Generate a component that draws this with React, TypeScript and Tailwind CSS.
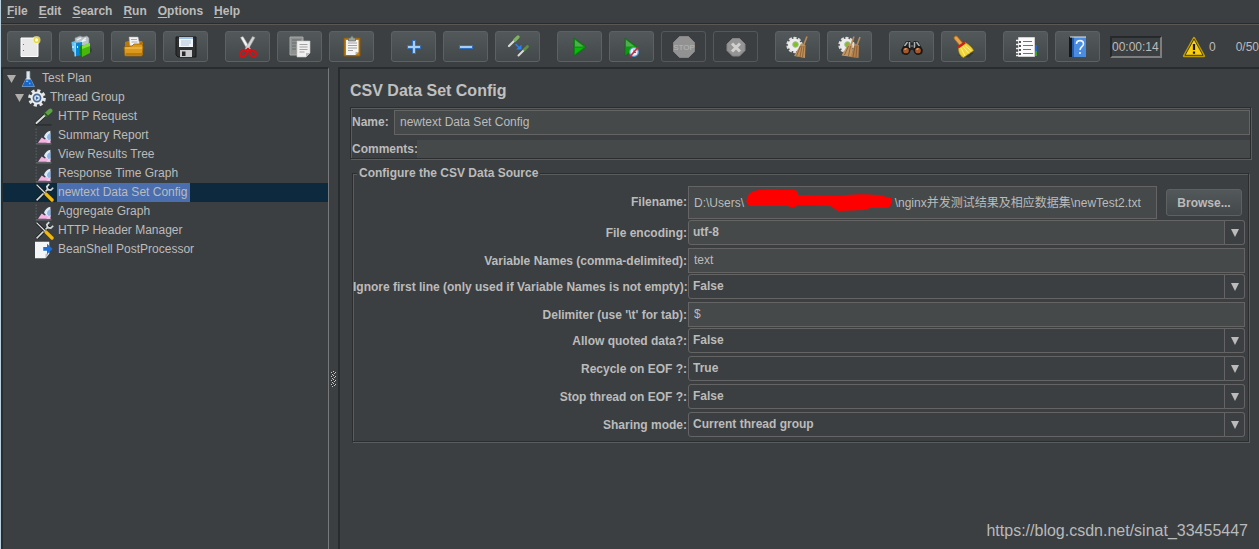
import { Fragment, useState } from 'react';
import type { ReactNode } from 'react';

const menus = ['File', 'Edit', 'Search', 'Run', 'Options', 'Help'];

function Svg({ children, size = 24 }: { children: ReactNode; size?: number }) {
  return (
    <svg width={size} height={size} viewBox="0 0 24 24" aria-hidden="true" className="shrink-0">
      {children}
    </svg>
  );
}

/* ---------- toolbar icons ---------- */

const NewIcon = () => (
  <Svg>
    <path d="M3 3h17v18.500H3z" fill="#e9e9e9" stroke="#fff" />
    <path d="M5 9.500h1M5 15.500h1" stroke="#777" />
    <circle cx="18.500" cy="5" r="4" fill="#f7f3b4" opacity=".7" />
    <circle cx="18.500" cy="5" r="2.300" fill="#fffce0" stroke="#e6d838" strokeWidth="1.300" />
  </Svg>
);

const TemplatesIcon = () => (
  <Svg>
    <path d="M5 3l5-2 3 1 4-1 2 2v8H5z" fill="#b9c3c8" stroke="#7f8d94" strokeWidth=".6" />
    <path d="M7 5l4-2M12 6l4-3M9 8l7-3" stroke="#eef3f5" strokeWidth="1.200" />
    <path d="M14 20l8-3v-3l-4-4z" fill="#2b2f31" opacity=".5" />
    <path d="M1.500 7l4-1 1 13-4-3z" fill="#5fc2f5" />
    <path d="M4 8l8-1v13l-7 1.500z" fill="#0a84d4" />
    <path d="M4 8l2-.3v13.500l-1.500.2z" fill="#8ad6ff" />
    <path d="M9.500 11l3-1v12l-3-3z" fill="#0e8a0b" />
    <path d="M12 11l8-3v10l-8 4z" fill="#47b80a" />
    <path d="M12 11l8-3v3l-8 3z" fill="#86e03a" />
    <path d="M3 11v2M7.500 11v2" stroke="#fff" />
  </Svg>
);

const OpenIcon = () => (
  <Svg>
    <path d="M3 7l3-1h14l1 2v12H3z" fill="#b97709" />
    <path d="M7 2h9l2 9H8z" fill="#f4f4f4" stroke="#aaa" strokeWidth=".5" />
    <path d="M9 4.500h6M9.500 7h6" stroke="#999" strokeWidth=".8" />
    <path d="M2 12l8-1 2-2h8l1 3-1 9H3z" fill="#dc9a1c" stroke="#9b6408" strokeWidth=".8" />
    <path d="M3 13h17" stroke="#f5c563" />
    <path d="M4 18h16v2.500H4z" fill="#b97b10" />
  </Svg>
);

const SaveIcon = () => (
  <Svg>
    <path d="M2 2h20v20H4l-2-2z" fill="#2e3032" stroke="#17191a" />
    <path d="M5 2h14v10H5z" fill="#f2f6fa" />
    <path d="M5 2h14v2H5z" fill="#9fc3e4" />
    <path d="M7 6h10M7 8h10M7 10h8" stroke="#9eb6cc" strokeWidth=".8" />
    <path d="M6 15h12v7H6z" fill="#c9cbcd" />
    <path d="M8 16.500h3.500v4.500H8z" fill="#26282a" />
  </Svg>
);

const CutIcon = () => (
  <Svg>
    <path d="M4.500 2.500l2.500-1 7.500 12.500-2.500 2z" fill="#f3f3f3" stroke="#9a9a9a" strokeWidth=".5" />
    <path d="M19 2.500l-2.500-1L9 14l2.500 2z" fill="#d4d4d4" stroke="#9a9a9a" strokeWidth=".5" />
    <ellipse cx="7.200" cy="18.500" rx="3.400" ry="2.600" fill="none" stroke="#d90f14" strokeWidth="2.300" transform="rotate(-30 7.200 18.500)" />
    <ellipse cx="16.800" cy="18.500" rx="3.400" ry="2.600" fill="none" stroke="#d90f14" strokeWidth="2.300" transform="rotate(30 16.800 18.500)" />
    <path d="M9 16.500l3-2.500 3 2.500" fill="none" stroke="#d90f14" strokeWidth="2.400" />
  </Svg>
);

const CopyIcon = () => (
  <Svg>
    <path d="M2 2h13v18H2z" fill="#8d918f" stroke="#a6a9a8" />
    <path d="M4 5h9M4 8h5M4 11h4M4 14h4" stroke="#666a69" />
    <path d="M9 6h13v12l-4 4H9z" fill="#f0f0f0" stroke="#c8c8c8" strokeWidth=".6" />
    <path d="M11.500 9.500h8M11.500 12h8M11.500 14.500h8M11.500 17h5" stroke="#a3a3a3" />
    <path d="M22 18h-4v4z" fill="#b8b8b8" />
  </Svg>
);

const PasteIcon = () => (
  <Svg>
    <path d="M4 3h16v18H4z" fill="#c17d11" stroke="#8f5902" />
    <path d="M6 5h12.500v12l-3 3H6z" fill="#f5f5f5" />
    <path d="M8 8h9M8 10.500h9M8 13h9M8 15.500h5" stroke="#a0a0a0" />
    <path d="M18.500 17h-3v3z" fill="#b5b5b5" />
    <path d="M8.500 3h2l1-2h1l1 2h2v3h-7z" fill="#9aa09a" stroke="#646864" strokeWidth=".7" />
  </Svg>
);

const PlusIcon = () => (
  <Svg>
    <path d="M10.500 5.500h3v5h5v3h-5v5h-3v-5h-5v-3h5z" fill="#a8cdf5" stroke="#2f70c0" />
  </Svg>
);

const MinusIcon = () => (
  <Svg>
    <path d="M5.500 10.500h13v3h-13z" fill="#a8cdf5" stroke="#2f70c0" />
  </Svg>
);

const ToggleIcon = () => (
  <Svg>
    <path d="M3 11l7-7" stroke="#d8dbd8" strokeWidth="2.200" strokeLinecap="round" />
    <path d="M9 5l3-3" stroke="#7fb265" strokeWidth="3.200" strokeLinecap="round" />
    <path d="M12.500 20.500l6-6" stroke="#d8dbd8" strokeWidth="2" strokeLinecap="round" />
    <path d="M18.500 14.500l3-3" stroke="#5d8f49" strokeWidth="2.800" strokeLinecap="round" />
    <path d="M9.500 9l4 4" stroke="#2b7ff0" strokeWidth="1.500" />
    <path d="M15.500 9.500V14.500H10z" fill="#2b7ff0" />
  </Svg>
);

const StartIcon = () => (
  <Svg>
    <path d="M6 3l12 9-12 9z" fill="#0b9c0b" stroke="#0a6d12" strokeWidth=".7" />
    <path d="M7 5l8.500 6.500H7z" fill="#4fae4f" />
    <path d="M7 13h8l-8 6z" fill="#08bb08" />
  </Svg>
);

const StartNoPauseIcon = () => (
  <Svg>
    <path d="M5 3l12 9-12 9z" fill="#0b9c0b" stroke="#0a6d12" strokeWidth=".7" />
    <path d="M6 5l8.500 6.500H6z" fill="#4fae4f" />
    <circle cx="14" cy="17" r="4.300" fill="#e8f2fb" stroke="#4e9bdd" strokeWidth="1.300" />
    <path d="M14 14.500v3h2" fill="none" stroke="#3b6ea5" />
    <path d="M10 21.500l8-9" stroke="#d6252b" strokeWidth="1.700" />
  </Svg>
);

const StopIcon = () => (
  <Svg>
    <path d="M7.500 1.500h9l6 6v9l-6 6h-9l-6-6v-9z" fill="#929292" stroke="#858585" />
    <text x="12" y="15" textAnchor="middle" fontSize="8" fill="#b8b8b8">
      STOP
    </text>
  </Svg>
);

const ShutdownIcon = () => (
  <Svg>
    <path d="M8.500 3.500h7l5.500 5.500v6.500l-5.500 5.500h-7L3 15.500V9z" fill="#949494" stroke="#858585" />
    <path d="M8 8.500l8 8M16 8.500l-8 8" stroke="#d0d0d0" strokeWidth="3" />
  </Svg>
);

function Gear() {
  return (
    <>
      <circle cx="8.500" cy="10" r="6.800" fill="none" stroke="#dcdcdc" strokeWidth="2.800" strokeDasharray="3 1.400" />
      <circle cx="8.500" cy="10" r="6.500" fill="#ededed" />
      <circle cx="9.500" cy="9.500" r="2.800" fill="#79c61b" stroke="#a9b79b" />
    </>
  );
}

const ClearIcon = () => (
  <Svg>
    <Gear />
    <path d="M21 1.500l-3.500 9" stroke="#b98a55" strokeWidth="1.600" />
    <path d="M15 8.500l4.500 1.500-.5 13-11-2z" fill="#bd8f5c" />
    <path d="M14.500 11l-4 10M16 11l-2 11M18 11l-1.500 11" stroke="#87592d" strokeWidth=".8" />
  </Svg>
);

const ClearAllIcon = () => (
  <Svg>
    <Gear />
    <path d="M16 1.500l-3 9M22 2l-3 8" stroke="#b98a55" strokeWidth="1.600" />
    <path d="M10.500 8.500l4 1.500v12l-11-1.500z" fill="#c49762" />
    <path d="M17 8.500l4 1.500-.5 13-8-1z" fill="#b2814d" />
    <path d="M10.500 11l-4 9M12.500 11l-2 10M17 11l-2 11M19 11l-1 11" stroke="#87592d" strokeWidth=".8" />
  </Svg>
);

const SearchIcon = () => (
  <Svg>
    <path d="M1 15l5-9h4l2 2 2-2h4l5 9-1 4-5 1-4-5h-2l-4 5-5-1z" fill="#232323" />
    <path d="M4.500 11l3-4M19.500 11l-3-4M9.500 7v6M14.500 7v6" stroke="#a9b0b6" strokeWidth="1.500" />
    <path d="M10 11h4" stroke="#555" strokeWidth="2" />
    <circle cx="6" cy="15.500" r="3.600" fill="#a7582a" stroke="#161616" strokeWidth="1.500" />
    <circle cx="18" cy="15.500" r="3.600" fill="#a7582a" stroke="#161616" strokeWidth="1.500" />
    <path d="M4.500 14.500l2-1M16.500 14.500l2-1" stroke="#efb27c" strokeWidth="1.200" />
  </Svg>
);

const BroomIcon = () => (
  <Svg>
    <path d="M5 20l12 2.500 5-5z" fill="#252829" opacity=".5" />
    <path d="M4 3l5 6" stroke="#a66a24" strokeWidth="4.600" strokeLinecap="round" />
    <path d="M4 3l5 6" stroke="#e6a549" strokeWidth="3" strokeLinecap="round" />
    <path d="M6.500 12l6.500-4.500c5 3 7 5 8.500 8l-10 7C7.500 20.500 6.500 17 6.500 12z" fill="#f0d332" stroke="#b89a16" strokeWidth=".7" />
    <path d="M9 13l4 8M11 11.500l6 7M13 10.500l6.500 5.500" stroke="#fdf090" />
    <path d="M6 12.500l7-5" stroke="#cf2118" strokeWidth="2.600" />
  </Svg>
);

const FunctionIcon = () => (
  <Svg>
    <path d="M20 10h3v6h-3z" fill="#2166cc" />
    <path d="M20 16h3v5h-3z" fill="#39a521" />
    <path d="M4.500 2.500h16v19h-16z" fill="#fbfbfb" stroke="#d0d0d0" />
    <path d="M9 6.500h9M9 10.500h10M9 14.500h8M9 18.500h10" stroke="#4779c4" strokeWidth="1.200" />
    <path d="M2 5.500h4M2 9.500h4M2 13.500h4M2 17.500h4M2 20.500h4" stroke="#f4f4f4" strokeWidth="1.600" />
    <path d="M5 7h2M5 11h2M5 15h2M5 19h2" stroke="#222" strokeWidth="1.400" />
  </Svg>
);

const HelpIcon = () => (
  <Svg>
    <path d="M3 2h4v20H3z" fill="#15171a" />
    <path d="M6 2h14v20H6z" fill="#4b8be0" />
    <path d="M6 2h2v20H6z" fill="#2360ad" />
    <path d="M4 2h16" stroke="#dfe8f2" />
    <path d="M10.500 9c0-4.500 7-4.500 7 0 0 2.500-3.500 3-3.500 6M14 17v2" fill="none" stroke="#eef5ff" strokeWidth="1.600" />
  </Svg>
);

const WarningIcon = () => (
  <Svg>
    <path d="M12 3l10 18H2z" fill="#f9cf10" stroke="#b99a0c" strokeWidth="2.400" strokeLinejoin="round" />
    <path d="M12 4l9 16.300H3z" fill="#f9cf10" stroke="#3a3410" strokeWidth=".9" strokeLinejoin="round" />
    <path d="M12 9v6M12 16.500v2.300" stroke="#1b1b1b" strokeWidth="2.200" />
  </Svg>
);

/* ---------- tree icons ---------- */

const FlaskIcon = () => (
  <Svg size={18}>
    <path d="M9 2h4v8l6 12H3l6-12z" fill="#dfe9f2" stroke="#b3c3d0" />
    <path d="M7.500 12.500h7l4.500 9.500H3z" fill="#1767c8" />
    <path d="M8 15h3M12 18h2" stroke="#68b2ff" strokeWidth="2" />
  </Svg>
);

const GearIcon = () => (
  <Svg size={18}>
    <circle cx="12" cy="12" r="9.800" fill="none" stroke="#e3e6e9" strokeWidth="4" strokeDasharray="4.200 3.497" />
    <circle cx="12" cy="12" r="8.600" fill="#eceef0" />
    <circle cx="12" cy="12" r="4.800" fill="#dbe8f7" stroke="#4d6990" strokeWidth="2.200" />
    <path d="M10.500 9.500l4 2.500-4 2.500z" fill="#2f68ac" />
  </Svg>
);

const PipetteIcon = () => (
  <Svg size={18}>
    <path d="M1 22.500h21" stroke="#2b2e30" strokeWidth="2" />
    <path d="M2 20L14 9" stroke="#23272a" strokeWidth="4.600" strokeLinecap="round" />
    <path d="M2 20L14 9" stroke="#d9dddb" strokeWidth="2.600" strokeLinecap="round" />
    <path d="M15 8.500l5.500-5" stroke="#5da343" strokeWidth="5.500" strokeLinecap="round" />
    <path d="M12.500 6.500l5 5" stroke="#2d5524" strokeWidth="2" />
  </Svg>
);

const GraphIcon = () => (
  <Svg size={18}>
    <path d="M1.500 2v20" stroke="#67707a" strokeDasharray="2 2" />
    <path d="M1 22.500h21" stroke="#858b90" />
    <path d="M4 21l5-7 4 2.500L17 14l4 7z" fill="#f5b4e4" />
    <path d="M12 13c1-4 4-7 8.500-8v14C17 18 14 16 12 13z" fill="#dcebfa" />
    <path d="M16 14c0-3 2-5 4.500-6v10c-2 0-4-1.500-4.500-4z" fill="#8db6e6" />
    <path d="M15 21l5.500-5V21z" fill="#f7c8ec" />
  </Svg>
);

const ToolsIcon = () => (
  <Svg size={19}>
    <path d="M2 22L18 6" stroke="#191c1e" strokeWidth="4" />
    <path d="M2 22L17 7" stroke="#d6d9d9" strokeWidth="2" />
    <path d="M18 1.500l-3 3 1 4 4 .5 3-3" fill="none" stroke="#d6d9d9" strokeWidth="2.200" />
    <path d="M2 2l11 11" stroke="#16191b" strokeWidth="3.600" />
    <path d="M2 2l11 11" stroke="#e0e0e0" strokeWidth="1.600" />
    <path d="M14 14l7.500 7.500" stroke="#f2b90f" strokeWidth="4.200" strokeLinecap="round" />
  </Svg>
);

const ScriptIcon = () => (
  <Svg size={18}>
    <path d="M0 1h19v16l-5 6H0z" fill="#f3f5f6" />
    <path d="M19 17l-5 6v-6z" fill="#b9c0c4" />
    <path d="M11 8h5V3.500l7.500 7-7.500 7V13h-5z" fill="#1b6fd6" />
  </Svg>
);

const toolGroups = [
  [
    { label: 'New', icon: <NewIcon /> },
    { label: 'Templates', icon: <TemplatesIcon /> },
    { label: 'Open', icon: <OpenIcon /> },
    { label: 'Save', icon: <SaveIcon /> },
  ],
  [
    { label: 'Cut', icon: <CutIcon /> },
    { label: 'Copy', icon: <CopyIcon /> },
    { label: 'Paste', icon: <PasteIcon /> },
  ],
  [
    { label: 'Expand All', icon: <PlusIcon /> },
    { label: 'Collapse All', icon: <MinusIcon /> },
    { label: 'Toggle', icon: <ToggleIcon /> },
  ],
  [
    { label: 'Start', icon: <StartIcon /> },
    { label: 'Start no pauses', icon: <StartNoPauseIcon /> },
    { label: 'Stop', icon: <StopIcon />, disabled: true },
    { label: 'Shutdown', icon: <ShutdownIcon />, disabled: true },
  ],
  [
    { label: 'Clear', icon: <ClearIcon /> },
    { label: 'Clear All', icon: <ClearAllIcon /> },
  ],
  [
    { label: 'Search', icon: <SearchIcon /> },
    { label: 'Reset Search', icon: <BroomIcon /> },
  ],
  [
    { label: 'Function Helper', icon: <FunctionIcon /> },
    { label: 'Help', icon: <HelpIcon /> },
  ],
];

const treeItems = [
  { name: 'HTTP Request', icon: <PipetteIcon /> },
  { name: 'Summary Report', icon: <GraphIcon /> },
  { name: 'View Results Tree', icon: <GraphIcon /> },
  { name: 'Response Time Graph', icon: <GraphIcon /> },
  { name: 'newtext Data Set Config', icon: <ToolsIcon /> },
  { name: 'Aggregate Graph', icon: <GraphIcon /> },
  { name: 'HTTP Header Manager', icon: <ToolsIcon /> },
  { name: 'BeanShell PostProcessor', icon: <ScriptIcon /> },
];

const fields = [
  { id: 'encoding', label: 'File encoding:', kind: 'combo', value: 'utf-8', options: ['utf-8', 'UTF-16', 'ISO-8859-15', 'US-ASCII'], editable: true },
  { id: 'variables', label: 'Variable Names (comma-delimited):', kind: 'text', value: 'text' },
  { id: 'ignore', label: 'Ignore first line (only used if Variable Names is not empty):', kind: 'combo', value: 'False', options: ['True', 'False'] },
  { id: 'delimiter', label: "Delimiter (use '\\t' for tab):", kind: 'text', value: '$' },
  { id: 'quoted', label: 'Allow quoted data?:', kind: 'combo', value: 'False', options: ['True', 'False'] },
  { id: 'recycle', label: 'Recycle on EOF ?:', kind: 'combo', value: 'True', options: ['True', 'False'] },
  { id: 'stop', label: 'Stop thread on EOF ?:', kind: 'combo', value: 'False', options: ['True', 'False'] },
  { id: 'sharing', label: 'Sharing mode:', kind: 'combo', value: 'Current thread group', options: ['All threads', 'Current thread group', 'Current thread'] },
];

// blank stretch under the red marker
const hiddenPath = '\u3000'.repeat(12) + '  ';

function Toolbar() {
  return (
    <div className="flex items-center gap-[17px] overflow-hidden border-t border-[#5b5754] py-[6px] pl-[6px]">
      {toolGroups.map((group) => (
        <div key={group[0].label} className="flex shrink-0 gap-[7px]">
          {group.map((tool) => (
            <button
              key={tool.label}
              type="button"
              aria-label={tool.label}
              disabled={'disabled' in tool}
              className="flex h-[31px] w-[45px] items-center justify-center rounded-[3px] border border-[#5e6162] bg-linear-to-b from-[#53585a] to-[#43484a] disabled:border-[#565858] disabled:from-[#3c3f41] disabled:to-[#3c3f41]"
            >
              {tool.icon}
            </button>
          ))}
        </div>
      ))}
      <div className="-ml-[7px] flex shrink-0 items-center">
        <span className="w-[52px] border-2 border-t-[#26292b] border-l-[#26292b] border-r-[#7b7d7e] border-b-[#7b7d7e] leading-[18px]">00:00:14</span>
        <span className="ml-5 flex items-center gap-[3px]">
          <WarningIcon />
          0
        </span>
        <span className="ml-5">0/50</span>
      </div>
    </div>
  );
}

function Arrow() {
  return (
    <svg width="9" height="8" viewBox="0 0 9 8" aria-hidden="true" className="shrink-0">
      <path d="M0 0h9L4.500 8z" fill="#b0adab" />
    </svg>
  );
}

function TreePanel() {
  const [selected, setSelected] = useState('newtext Data Set Config');
  return (
    <aside className="w-[328px] shrink-0 border-t-2 border-r border-l-2 border-t-[#292c2e] border-r-[#77797a] border-l-[#292c2e]">
      <ul className="leading-[19px]">
        <li className="flex h-[19px] items-center gap-1 pl-1">
          <Arrow />
          <FlaskIcon />
          Test Plan
        </li>
        <li className="flex h-[19px] items-center gap-1 pl-3">
          <Arrow />
          <GearIcon />
          Thread Group
        </li>
        {treeItems.map((item) => (
          <li key={item.name} className={selected === item.name ? 'bg-[#0d293e]' : ''}>
            <button type="button" onClick={() => setSelected(item.name)} className="flex h-[19px] w-full items-center pl-8">
              <span className="flex w-[22px] justify-start">{item.icon}</span>
              <span className={selected === item.name ? 'bg-[#4b6eaf] pr-[3px] pl-[1px]' : 'pl-[1px]'}>{item.name}</span>
            </button>
          </li>
        ))}
      </ul>
    </aside>
  );
}

function Splitter() {
  return (
    <div className="flex w-[9px] shrink-0 flex-col items-center justify-center pb-[1px]">
      <div className="h-[142px]" />
      <svg width="5" height="16" aria-hidden="true">
        <defs>
          <pattern id="grip" width="4" height="4" patternUnits="userSpaceOnUse">
            <path d="M0 1h1v1H0zM2 0h1v1H2zM1 3h1v1H1zM3 2h1v1H3z" fill="#c9cacb" />
            <path d="M1 2h1v1H1zM3 1h1v1H3z" fill="#1f2122" />
          </pattern>
        </defs>
        <rect width="5" height="16" fill="url(#grip)" />
      </svg>
    </div>
  );
}

function Combo({ id, value, options, editable }: { id: string; value: string; options: string[]; editable?: boolean }) {
  return (
    <div className="grid h-[25px]">
      <select
        id={id}
        defaultValue={value}
        className={`col-start-1 row-start-1 w-full appearance-none rounded-[3px] border border-[#646464] pb-[2px] pl-1 font-bold outline-none ${editable ? 'bg-[#45494a]' : 'bg-[#3c3f41]'}`}
      >
        {options.map((option) => (
          <option key={option}>{option}</option>
        ))}
      </select>
      <span className="pointer-events-none col-start-1 row-start-1 flex w-[21px] items-center justify-center justify-self-end rounded-r-[3px] border border-[#646464] bg-[#3c3f41] pt-px">
        <svg width="8" height="8" viewBox="0 0 8 8" aria-hidden="true">
          <path d="M0 0h8L4 8z" fill="#bbb" />
        </svg>
      </span>
    </div>
  );
}

function ConfigPanel() {
  return (
    <main className="flex min-w-0 flex-1 flex-col border-t-2 border-l-2 border-[#292c2e] pr-2 pl-[10px]">
      <h1 className="pt-3 pb-[6px] text-base leading-5 font-bold text-[#c0c0c0]">CSV Data Set Config</h1>

      <section className="border border-[#2b2d2f] pt-[2px] shadow-[1px_1px_0_0_#5a5d5e,inset_1px_1px_0_0_#5a5d5e]">
        <div className="flex h-[25px] items-center">
          <label htmlFor="name" className="w-[43px] shrink-0 pb-px pl-px font-bold">
            Name:
          </label>
          <input id="name" defaultValue="newtext Data Set Config" className="h-[25px] min-w-0 flex-1 border border-[#646464] bg-[#45494a] px-[5px] pb-[2px] outline-none" />
        </div>
        <div className="mt-[5px] flex h-[18px] items-center">
          <label htmlFor="comments" className="w-[66px] shrink-0 pl-px font-bold">
            Comments:
          </label>
          <input id="comments" className="h-[18px] min-w-0 flex-1 bg-[#45494a] outline-none" />
        </div>
      </section>

      <fieldset className="mt-[7px] mr-[2px] ml-[2px] min-w-0 border border-[#2b2d2f] pr-[3px] pb-px shadow-[1px_1px_0_0_#5a5d5e,inset_1px_1px_0_0_#5a5d5e]">
        <legend className="ml-1 bg-[#3c3f41] px-[2px] leading-[15px] font-bold">Configure the CSV Data Source</legend>
        <div className="grid grid-cols-[335px_minmax(0,1fr)] pt-[5px]">
          <label htmlFor="filename" className="pr-px text-right leading-[33px] font-bold">
            Filename:
          </label>
          <div className="flex h-[34px] items-start gap-[9px] pr-[3px]">
            <div className="relative min-w-0 flex-1">
              <input
                id="filename"
                defaultValue={`D:\\Users\\${hiddenPath}\\nginx并发测试结果及相应数据集\\newTest2.txt`}
                className="h-[33px] w-full border border-[#646464] bg-[#45494a] px-[5px] pb-[2px] outline-none"
              />
              <svg width="148" height="24" viewBox="0 0 148 24" aria-hidden="true" className="pointer-events-none absolute top-[3px] left-[58px]">
                <path
                  d="M8 2Q22-1 36 1L48 1Q53 2 52 6L92 7Q110 4 132 6L141 8Q147 8 146 14L142 19L124 19L119 21L92 22Q88 19 84 17L52 16Q48 20 42 17L4 17Q-1 14 1 9Q2 4 8 2Z"
                  fill="#ff0000"
                />
              </svg>
            </div>
            <button type="button" className="mt-[3px] h-[27px] w-[76px] rounded-[3px] border border-[#5e6162] bg-linear-to-b from-[#53585a] to-[#43484a] font-bold">
              Browse...
            </button>
          </div>

          {fields.map((field) => (
            <Fragment key={field.id}>
              <label htmlFor={field.id} className="pr-px text-right leading-[26px] font-bold whitespace-nowrap">
                {field.label}
              </label>
              {field.kind === 'combo' ? (
                <div className="h-7">
                  <Combo id={field.id} value={field.value} options={field.options ?? []} editable={field.editable} />
                </div>
              ) : (
                <div className="h-[26px]">
                  <input id={field.id} defaultValue={field.value} className="h-[25px] w-full border border-[#646464] bg-[#45494a] px-[5px] pb-[2px] outline-none" />
                </div>
              )}
            </Fragment>
          ))}
        </div>
      </fieldset>

      <footer className="mt-auto self-end pr-[3px] pb-2 text-base leading-5 text-[#b9babb]">https://blog.csdn.net/sinat_33455447</footer>
    </main>
  );
}

export default function App() {
  return (
    <div className="flex min-h-screen flex-col border-l border-[#b8cfdd] bg-[#3c3f41] font-['Liberation_Sans','Noto_Sans_CJK_SC',sans-serif] text-xs text-[#bbbbbb]">
      <nav className="flex h-6 items-center gap-[11px] border-b border-[#2a2b2c] pb-[2px] pl-[6px] font-bold">
        {menus.map((menu) => (
          <button key={menu} type="button" className="first-letter:underline first-letter:underline-offset-2">
            {menu}
          </button>
        ))}
      </nav>
      <Toolbar />
      <div className="-mt-px flex flex-1">
        <TreePanel />
        <Splitter />
        <ConfigPanel />
      </div>
    </div>
  );
}
